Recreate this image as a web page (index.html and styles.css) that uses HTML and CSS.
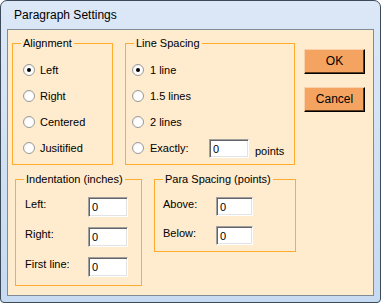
FILE: index.html
```html
<!DOCTYPE html>
<html lang="en">
<head>
  <meta charset="UTF-8" />
  <title>Paragraph Settings</title>
  <link rel="stylesheet" href="styles.css">
</head>
<body>
  <div class="window">
    <div class="titlebar">Paragraph Settings</div>

    <div class="client">
      <div class="row top">
        <!-- Alignment -->
        <fieldset class="group align">
          <legend>Alignment</legend>
          <div class="option"><span class="radio on"></span>Left</div>
          <div class="option"><span class="radio"></span>Right</div>
          <div class="option"><span class="radio"></span>Centered</div>
          <div class="option"><span class="radio"></span>Jusitified</div>
        </fieldset>

        <!-- Line spacing -->
        <fieldset class="group spacing">
          <legend>Line Spacing</legend>
          <div class="option"><span class="radio on"></span>1 line</div>
          <div class="option"><span class="radio"></span>1.5 lines</div>
          <div class="option"><span class="radio"></span>2 lines</div>
          <div class="option">
            <span class="radio"></span><span class="exact">Exactly:</span>
            <span class="box">0</span><span class="unit">points</span>
          </div>
        </fieldset>

        <div class="buttons">
          <div class="btn">OK</div>
          <div class="btn">Cancel</div>
        </div>
      </div>

      <div class="row bottom">
        <!-- Indentation -->
        <fieldset class="group indent">
          <legend>Indentation (inches)</legend>
          <div class="field"><span class="lbl">Left:</span><span class="box">0</span></div>
          <div class="field"><span class="lbl">Right:</span><span class="box">0</span></div>
          <div class="field"><span class="lbl">First line:</span><span class="box">0</span></div>
        </fieldset>

        <!-- Para spacing -->
        <fieldset class="group para">
          <legend>Para Spacing (points)</legend>
          <div class="field"><span class="lbl">Above:</span><span class="box">0</span></div>
          <div class="field"><span class="lbl">Below:</span><span class="box">0</span></div>
        </fieldset>
      </div>
    </div>
  </div>
</body>
</html>
```

FILE: styles.css
```css
body {
  margin: 0;
  background: #fff;
  font-family: 'Liberation Sans', Arial, sans-serif;
  font-size: 11px;
  color: #000;
}

.window {
  width: 381px;
  height: 303px;
  box-sizing: border-box;
  border: 1px solid #3d4a5a;
  border-radius: 7px 7px 4px 4px;
  background: linear-gradient(to bottom, #dce8f7, #c6daf2);
  padding: 0 6px 6px 6px;
}

.titlebar {
  height: 28px;
  box-sizing: border-box;
  padding: 7px 0 0 7px;
  font-size: 12px;
  line-height: 15px;
}

.client {
  height: 267px;
  box-sizing: border-box;
  border: 1px solid #7f8b97;
  background: #ffebcd;
}

.row {
  display: flex;
  align-items: flex-start;
}

.row.top {
  margin-top: 7px;
  padding-left: 4px;
}

.row.bottom {
  margin-top: 8px;
  padding-left: 7px;
}

.group {
  box-sizing: border-box;
  margin: 0;
  min-width: 0;
  border: 1px solid #ffab2e;
  padding-top: 8px;
  padding-right: 0;
  padding-bottom: 0;
}

.group legend {
  padding: 0 2px;
  line-height: 12px;
}

.align {
  width: 101px;
  height: 128px;
  padding-left: 10px;
}
.align legend { margin-left: -2px; }

.spacing {
  width: 170px;
  height: 128px;
  margin-left: 12px;
  padding-left: 6px;
}
.spacing legend { margin-left: 2px; }

.indent {
  width: 127px;
  height: 113px;
  padding-left: 9px;
  padding-top: 12px;
}
.indent legend { margin-left: -1px; }

.para {
  width: 142px;
  height: 79px;
  margin-left: 12px;
  padding-left: 8px;
  padding-top: 12px;
}

.option {
  height: 26px;
  display: flex;
  align-items: center;
}

.radio {
  width: 12px;
  height: 12px;
  box-sizing: border-box;
  border-radius: 50%;
  border: 1px solid #9a9a9a;
  background: radial-gradient(circle at 60% 60%, #fff 45%, #e6e6e6 100%);
  margin-right: 5px;
  position: relative;
}

.spacing .radio { margin-right: 6px; }

.radio.on::after {
  content: "";
  position: absolute;
  left: 3px;
  top: 3px;
  width: 4px;
  height: 4px;
  border-radius: 50%;
  background: #000;
}

.exact {
  width: 59px;
}

.box {
  width: 40px;
  height: 20px;
  box-sizing: border-box;
  border: 1px solid;
  border-color: #a0a0a0 #fff #fff #a0a0a0;
  box-shadow: inset 1px 1px 0 #646464, inset -1px -1px 0 #e3e3e3;
  background: #fff;
  padding: 3px 0 0 3px;
  line-height: 13px;
}

.spacing .box {
  height: 19px;
}

.unit {
  margin-left: 6px;
  padding-top: 6px;
}

.field {
  display: flex;
  align-items: flex-start;
  margin-bottom: 10px;
}

.lbl {
  padding-top: 1px;
  line-height: 13px;
}

.indent .lbl { width: 63px; }
.para .lbl { width: 53px; }
.para .box { width: 37px; height: 19px; }

.buttons {
  margin-left: 9px;
  padding-top: 12px;
  display: flex;
  flex-direction: column;
  gap: 13px;
}

.btn {
  width: 61px;
  height: 25px;
  box-sizing: border-box;
  background: #f4a460;
  border: 1px solid;
  border-color: #fad1aa #000 #000 #fad1aa;
  box-shadow: inset -1px -1px 0 #5c3c1e;
  font-size: 12px;
  line-height: 22px;
  text-align: center;
}
```
